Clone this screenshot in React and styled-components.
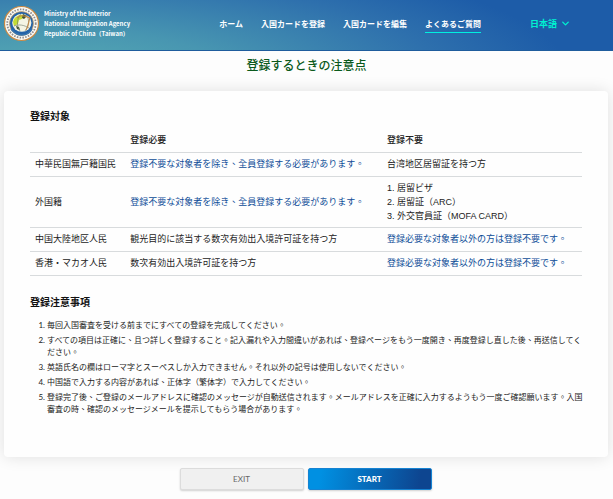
import styled, { createGlobalStyle } from 'styled-components';
import { ChevronDown } from 'lucide-react';

const GlobalStyle = createGlobalStyle`
  * {
    box-sizing: border-box;
  }

  body {
    margin: 0;
    background: #fdfdfd;
    color: #222;
    font-family: 'Noto Sans CJK TC', sans-serif;
    font-size: 9px;
    line-height: 14px;
  }
`;

const Header = styled.header`
  display: flex;
  align-items: center;
  height: 51px;
  padding: 0 42px 3px 3px;
  background: radial-gradient(ellipse 85% 260% at 8% 150%, #58adb4 0%, #4896b1 35%, #2e70ad 75%, #1d5ca8 100%);
  border-bottom: 1px solid #1f5d9d;
`;

const Brand = styled.a`
  display: flex;
  align-items: center;
  gap: 4px;
  color: #fff;
  font-size: 6px;
  font-weight: 700;
  line-height: 10px;
  text-decoration: none;
  white-space: nowrap;
`;

const Nav = styled.nav`
  display: flex;
  gap: 18px;
  margin-left: auto;
  margin-right: 49px;
`;

const NavItem = styled.a`
  padding: 2px 0 1px;
  border-bottom: 1px solid ${({ $active }) => ($active ? '#00f0e0' : 'transparent')};
  color: #fff;
  font-size: 8px;
  font-weight: 700;
  text-decoration: none;
  white-space: nowrap;
`;

const Language = styled.label`
  display: flex;
  align-items: center;
  gap: 2px;
  color: #00f0d0;
`;

const LanguageSelect = styled.select`
  appearance: none;
  padding: 0;
  border: none;
  background: transparent;
  color: inherit;
  font: inherit;
  font-weight: 700;
  cursor: pointer;
`;

const PageTitle = styled.h1`
  margin: 5px 0 17px;
  color: #0b5a1c;
  font-size: 12px;
  font-weight: 500;
  line-height: 18px;
  text-align: center;
`;

const Card = styled.section`
  margin: 0 5px 0 4px;
  padding: 17px 22px 42px 26px;
  border-radius: 4px;
  background: #fefefe;
  box-shadow: 0 0 16px rgba(0, 0, 0, 0.12);
`;

const SectionTitle = styled.h2`
  margin: 0;
  color: #111;
  font-size: 10px;
  font-weight: 700;
  line-height: 16px;
`;

const TableWrapper = styled.div`
  padding: 4px 4px 18px 0;
`;

const Table = styled.table`
  width: 100%;
  border-collapse: collapse;
  table-layout: fixed;
  text-align: left;

  tr {
    height: 24px;
    border-bottom: 1px solid #d8dbdd;
  }

  th,
  td {
    padding: 4px 5px;
    font-weight: 400;
  }

  thead th {
    font-weight: 500;
  }
`;

const NameColumn = styled.col`
  width: 17.25%;
`;

const RequiredColumn = styled.col`
  width: 46.5%;
`;

const Highlight = styled.span`
  color: #0d4c97;
`;

const Documents = styled.ol`
  margin: 0;
  padding: 0;
  font-family: 'Liberation Sans', 'Noto Sans CJK TC', sans-serif;
  list-style: decimal inside;
`;

const Notes = styled.ol`
  display: flex;
  flex-direction: column;
  gap: 3px;
  margin: 9px 0 0;
  padding: 0 0 0 17px;
  font-size: 8px;
  line-height: 12px;

  li::marker {
    font-family: Lato, sans-serif;
  }
`;

const Actions = styled.div`
  display: flex;
  justify-content: center;
  gap: 4px;
  padding: 11px 2px 9px 0;
`;

const Button = styled.button`
  width: 124px;
  height: 22px;
  padding: 0;
  border: 1px solid ${({ $primary }) => ($primary ? '#1683d2' : '#dcdcdc')};
  border-radius: 2px;
  background: ${({ $primary }) =>
    $primary ? 'linear-gradient(100deg, #0090e2 10%, #0d4590 90%)' : '#f0f0f0'};
  box-shadow: 0 1px 2px rgba(0, 0, 0, 0.18);
  color: ${({ $primary }) => ($primary ? '#fff' : '#666')};
  font-family: Lato, sans-serif;
  font-size: 8px;
  font-weight: ${({ $primary }) => ($primary ? 900 : 400)};
  cursor: pointer;
`;

const navItems = ['ホーム', '入国カードを登録', '入国カードを編集', 'よくあるご質問'];

const required = '登録不要な対象者を除き、全員登録する必要があります。';
const notRequired = '登録必要な対象者以外の方は登録不要です。';

const rows = [
  {
    name: '中華民国無戸籍国民',
    required: <Highlight>{required}</Highlight>,
    exempt: '台湾地区居留証を持つ方',
  },
  {
    name: '外国籍',
    required: <Highlight>{required}</Highlight>,
    exempt: (
      <Documents>
        <li>居留ビザ</li>
        <li>居留証（ARC）</li>
        <li>外交官員証（MOFA CARD）</li>
      </Documents>
    ),
  },
  {
    name: '中国大陸地区人民',
    required: '観光目的に該当する数次有効出入境許可証を持つ方',
    exempt: <Highlight>{notRequired}</Highlight>,
  },
  {
    name: '香港・マカオ人民',
    required: '数次有効出入境許可証を持つ方',
    exempt: <Highlight>{notRequired}</Highlight>,
  },
];

const notes = [
  '毎回入国審査を受ける前までにすべての登録を完成してください。',
  'すべての項目は正確に、且つ詳しく登録すること。記入漏れや入力間違いがあれば、登録ページをもう一度開き、再度登録し直した後、再送信してください。',
  '英語氏名の欄はローマ字とスーペスしか入力できません。それ以外の記号は使用しないでください。',
  '中国語で入力する内容があれば、正体字（繁体字）で入力してください。',
  '登録完了後、ご登録のメールアドレスに確認のメッセージが自動送信されます。メールアドレスを正確に入力するようもう一度ご確認願います。入国審査の時、確認のメッセージメールを提示してもらう場合があります。',
];

const Emblem = () => (
  <svg width="37" height="37" viewBox="0 0 37 37" aria-hidden="true">
    <circle cx="18.5" cy="18.5" r="17" fill="#fbfaf4" stroke="#c98a45" strokeWidth="1.2" />
    <circle cx="18.5" cy="18.5" r="14.2" fill="none" stroke="#45434c" strokeWidth="1.8" strokeDasharray="1.5 1.3" pathLength="88" opacity="0.6" />
    <circle cx="18.5" cy="18.5" r="12" fill="#2463a8" stroke="#d7a25f" strokeWidth="0.7" />
    <ellipse cx="18.8" cy="17.8" rx="9.6" ry="9" fill="#f4f4e4" />
    <path d="M10 17c1-5 6-8 11-7l-2 4-3 1-1 4-4 2z" fill="#c3dc35" />
    <path d="M20 9l4 2-3 3-2-1zM13 21l3 1 1 3-3-1z" fill="#3f5330" />
    <path d="M18 9c-4 4-5 12-1 17M23 10c4 4 3 11-1 16M11 21c5-2 10-1 15 2" fill="none" stroke="#6d7968" strokeWidth="0.6" />
    <path d="M14 13c4-4 8-2 13 0-2 4-1 8-4 12" fill="none" stroke="#c28a4b" strokeWidth="1.1" />
    <path d="M8 24c4 5 7 6 11 6s8-2 10-6" fill="none" stroke="#3474b0" strokeWidth="1.5" />
  </svg>
);

const App = () => {
  return (
    <>
      <GlobalStyle />
      <Header>
        <Brand href="#home">
          <Emblem />
          <span>
            Ministry of the Interior
            <br />
            National Immigration Agency
            <br />
            Republic of China（Taiwan）
          </span>
        </Brand>
        <Nav>
          {navItems.map((item, index) => (
            <NavItem key={item} href={`#nav-${index}`} $active={index === 3}>
              {item}
            </NavItem>
          ))}
        </Nav>
        <Language>
          <LanguageSelect aria-label="言語" defaultValue="ja">
            <option value="ja">日本語</option>
          </LanguageSelect>
          <ChevronDown size={11} strokeWidth={3} />
        </Language>
      </Header>

      <main>
        <PageTitle>登録するときの注意点</PageTitle>
        <Card>
          <SectionTitle>登録対象</SectionTitle>
          <TableWrapper>
            <Table>
              <colgroup>
                <NameColumn />
                <RequiredColumn />
                <col />
              </colgroup>
              <thead>
                <tr>
                  <td />
                  <th scope="col">登録必要</th>
                  <th scope="col">登録不要</th>
                </tr>
              </thead>
              <tbody>
                {rows.map((row) => (
                  <tr key={row.name}>
                    <th scope="row">{row.name}</th>
                    <td>{row.required}</td>
                    <td>{row.exempt}</td>
                  </tr>
                ))}
              </tbody>
            </Table>
          </TableWrapper>
          <SectionTitle>登録注意事項</SectionTitle>
          <Notes>
            {notes.map((note) => (
              <li key={note}>{note}</li>
            ))}
          </Notes>
        </Card>
        <Actions>
          <Button type="button">EXIT</Button>
          <Button type="button" $primary>START</Button>
        </Actions>
      </main>
    </>
  );
};

export default App;
